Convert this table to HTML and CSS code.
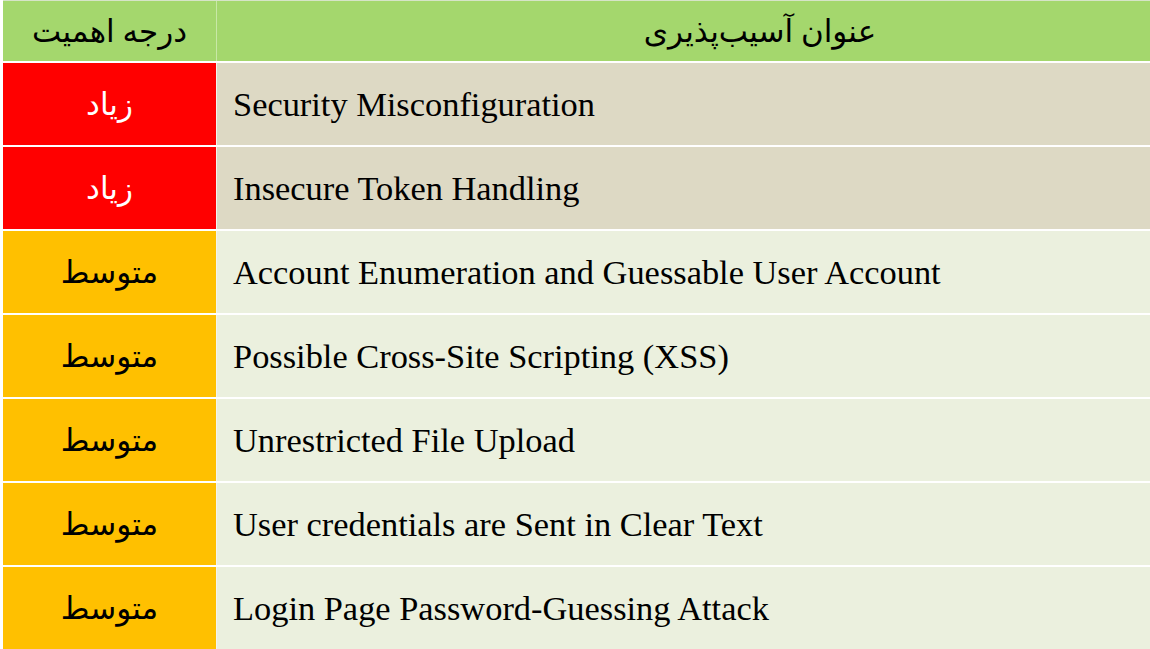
FILE: index.html
```html
<!DOCTYPE html>
<html lang="fa">
<head>
<meta charset="utf-8">
<link rel="stylesheet" href="styles.css">
</head>
<body>
<div class="table">
  <div class="row head">
    <div class="cell sev fa">درجه اهمیت</div>
    <div class="cell title fa">عنوان آسیب‌پذیری</div>
  </div>
  <div class="row high">
    <div class="cell sev fa">زیاد</div>
    <div class="cell title en">Security Misconfiguration</div>
  </div>
  <div class="row high">
    <div class="cell sev fa">زیاد</div>
    <div class="cell title en">Insecure Token Handling</div>
  </div>
  <div class="row med">
    <div class="cell sev fa">متوسط</div>
    <div class="cell title en">Account Enumeration and Guessable User Account</div>
  </div>
  <div class="row med">
    <div class="cell sev fa">متوسط</div>
    <div class="cell title en">Possible Cross-Site Scripting (XSS)</div>
  </div>
  <div class="row med">
    <div class="cell sev fa">متوسط</div>
    <div class="cell title en">Unrestricted File Upload</div>
  </div>
  <div class="row med">
    <div class="cell sev fa">متوسط</div>
    <div class="cell title en">User credentials are Sent in Clear Text</div>
  </div>
  <div class="row med">
    <div class="cell sev fa">متوسط</div>
    <div class="cell title en">Login Page Password-Guessing Attack</div>
  </div>
</div>
</body>
</html>
```
FILE: styles.css
```css
html, body {
  margin: 0;
  padding: 0;
  background: #ffffff;
  overflow: hidden;
}
body {
  width: 1150px;
  height: 649px;
}
.table {
  margin-left: 3px;
  border-top: 1px solid #d6e4c8;
  display: flex;
  flex-direction: column;
  gap: 2px;
}
.row {
  display: grid;
  grid-template-columns: 213px 1fr;
  column-gap: 1px;
  height: 82px;
  background: #f4f4ee;
}
.row.head {
  height: 60px;
  background: #c8e8a6;
}
.cell {
  display: flex;
  align-items: center;
}
.fa {
  direction: rtl;
  font-family: "Liberation Serif", "DejaVu Sans", serif;
  font-size: 31px;
  justify-content: center;
}
.head .title {
  padding-left: 153px;
}
.en {
  font-family: "Liberation Serif", serif;
  font-size: 34.4px;
  padding-left: 16px;
  color: #000;
  white-space: nowrap;
}
.head .cell { background: #a4d76d; color: #000; }
.high .sev { background: #ff0000; color: #ffffff; }
.high .title { background: #ddd9c4; }
.med .sev { background: #ffc000; color: #000; }
.med .title { background: #ebf0de; }
```
